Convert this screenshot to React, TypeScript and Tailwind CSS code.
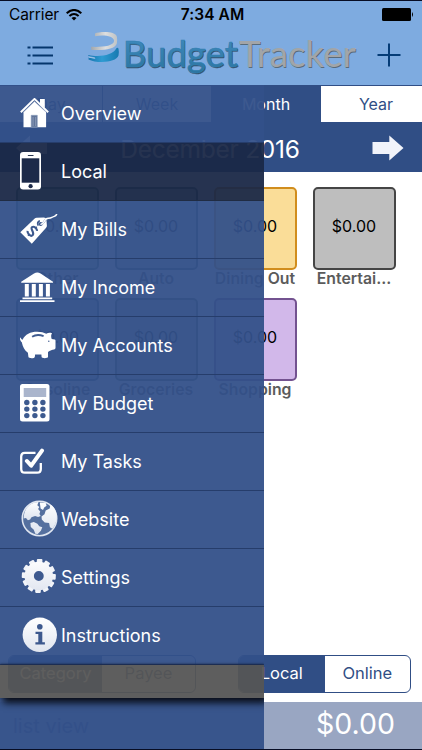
import React from 'react';

const gearTeeth = Array.from({ length: 12 }, (_, i) => i * 30 + 3);

function Icon({ name }: { name: string }) {
  switch (name) {
    case 'Overview':
      return (
        <svg width="30" height="30" viewBox="0 0 30 30">
          <path d="M20 1h4.8v9L20 6z" fill="#fff" />
          <path d="M14.5 3.5 3.5 14v15.3h22.6V14z" fill="#fff" />
          <path d="M.8 14.2 14.5.9l13.7 13.3" fill="none" stroke="#fff" strokeWidth="1.9" />
          <path d="M3.5 14.1 14.5 3.5l11.6 10.6" fill="none" stroke="#a9b7d0" strokeWidth=".6" />
          <path d="M11.2 17.3h6.1V29h-6.1z" fill="#607499" stroke="#8b9dbd" strokeWidth=".6" />
          <path d="M12.5 19h1.2v9h-1.2zm2.5 0h1.2v9H15z" fill="#8293b1" />
        </svg>
      );
    case 'Local':
      return (
        <svg width="22" height="38" viewBox="0 0 22 38">
          <rect width="21" height="37.5" rx="3.2" fill="#fff" />
          <path d="M1.7 6.3h17.6v24.4H1.7z" fill="#1c2a49" />
          <path d="M8.3 3.5h4.8" stroke="#26344f" strokeWidth="1.1" strokeLinecap="round" />
          <circle cx="10.6" cy="34.2" r="2.1" fill="#1c2a49" />
        </svg>
      );
    case 'My Bills':
      return (
        <svg width="38" height="30" viewBox="0 0 38 30">
          <path d="M.3 18.2 14.7 4.5c.6-.6 1-.8 1.8-.8l7.2-.3c1.6 0 2.5.8 2.7 2.2l.5 6.1c0 1-.3 1.7-1 2.4L11.8 29.7Z" fill="#fff" />
          <circle cx="20.6" cy="10" r="2" fill="#3d598e" />
          <path d="M18.4 11.6c-1.5-1.7-.5-4.6 1.5-4.8M21 10.2c3.2-.2 3-3.8 5-5" fill="none" stroke="#3d598e" strokeWidth="1.8" />
          <path d="M21 10.2c4.1-.3 2.5-6 7.3-5.9 3.4.1 3-.9 5.2-1.7 1.6-.6 2.4-.6 3.1-2.2" fill="none" stroke="#fff" strokeWidth="1.5" strokeLinecap="round" />
          <g transform="rotate(45 12 17.5)" fill="none" stroke="#3d598e">
            <path d="M15.1 13.5c-1.2-1.5-5.6-1.6-6.2.8-.6 2.7 6.2 2.1 6.2 5.2 0 2.9-4.9 2.9-6.7.8" strokeWidth="2.1" />
            <path d="M12 10.8v2m0 8.4v2.1" strokeWidth="1.6" />
          </g>
        </svg>
      );
    case 'My Income':
      return (
        <svg width="36" height="31" viewBox="0 0 36 31" fill="#fff">
          <path d="M1.2 10.8v-1L14 1.5q3.3-2.2 6.6 0L33 9.8v1zM4.8 12h4v12.6h-4zm7 0h4v12.6h-4zm7.1 0h4v12.6h-4zm7 0h4v12.6h-4zM2.5 25.4h29.7v1.8H2.5zM0 28.3h34.5v1.6H0z" />
        </svg>
      );
    case 'My Accounts':
      return (
        <svg width="36" height="28" viewBox="0 0 36 28">
          <path d="M0 6.6c.7-.2 1.1 2.2 2.6 2.1C5.2 3.2 10.7.6 17.4.7c4 .1 6.3.7 8.8 2.1 1.7-1 3.2-1.1 5.2-.8.9.3.6.8.1 1.2-.5.8-.5 3 .2 4.7l3 .7c.8.3.8.7.8 1.3v7.2c0 1.5-2.5 1.6-4.3 2.2-1.3.6-2.2 1.1-3.2 1.7v5c0 1.5-6.3 1.6-6.4 0l-.2-2.5h-6.3l-.3 2.4c-.3 1.8-6.2 1.8-6.4-.1l-.5-4.1C4.4 19.3 2.8 15.9 1.8 11.2.4 10.5-.7 6.8 0 6.6Z" fill="#fff" />
          <path d="M12.1 5.7c3.2-2 7.6-2.1 11.5-.6" stroke="#405c90" strokeWidth="1.8" fill="none" />
          <circle cx="28.8" cy="10.3" r=".7" fill="#3c588d" />
        </svg>
      );
    case 'My Budget':
      return (
        <svg width="30" height="38" viewBox="0 0 30 38">
          <rect width="29.5" height="37.5" rx="2.5" fill="#fff" />
          <path d="M3.7 4h22.5v9H3.7z" fill="#aab5cc" />
          {[18.5, 25.1, 31.6].map((y) => [6.8, 14.9, 22.9].map((x) => <circle key={`${x}-${y}`} cx={x} cy={y} r="2.7" fill="#3d5a8f" />))}
        </svg>
      );
    case 'My Tasks':
      return (
        <svg width="25" height="27" viewBox="0 0 25 27" fill="none" stroke="#fff">
          <path d="M15.5 4.9H4.8Q1.2 4.9 1.2 8.5V21q0 3.7 3.6 3.7h12.3q3.7 0 3.7-3.7v-6" strokeWidth="2.3" />
          <path d="m6.9 13 4.3 4.7L22 2.6" strokeWidth="4" strokeLinecap="round" strokeLinejoin="round" />
        </svg>
      );
    case 'Website':
      return (
        <svg width="37" height="37" viewBox="0 0 37 37">
          <defs><linearGradient id="globe" x2="0" y2="1"><stop stopColor="#fff" /><stop offset="1" stopColor="#dde3ef" /></linearGradient></defs>
          <circle cx="18.5" cy="18.5" r="17.2" fill="#55709f" stroke="#dfe5f0" strokeWidth="1.6" />
          <path d="M5 9C8 4.8 12 2.2 17.5 2l-1.2 3.2 2 1.8-1.2 2 2.1 2.4-.8 2.7 1.3 1.8-2.6 1.2-3-1.2-3.6 1.3-1.4 2.2-2.2.8-1.9-2.2-2.4.6C2.9 15 3.3 12 5 9z" fill="url(#globe)" />
          <path d="M9.4 22.9l3.4-1 3.6 1.9 1.9 2.5 3 .9-1.4 3.6-3.2 3.2-2.4-.3-1.5-3.9-3-2.7zM18.8 2.5l5.8.3 1 3-2.4 1.7-1.2 2.6-2.4-1.6zM20.5 16.6l3-2.4 1.2-3.6 4-2.1.8-4.1C34.2 7.7 36 13 35.6 18.2c-.4 4.5-2 7.9-4.3 10.6l-2.4-1.5-.8-4.4-4.4-.5-2.9-2.8z" fill="url(#globe)" />
        </svg>
      );
    case 'Settings':
      return (
        <svg width="36" height="36" viewBox="0 0 36 36">
          <defs><linearGradient id="gear" gradientUnits="userSpaceOnUse" x1="0" y1="0" x2="0" y2="36"><stop stopColor="#fff" /><stop offset="1" stopColor="#dfe4ef" /></linearGradient></defs>
          <g fill="#f2f4f9">{gearTeeth.map((a) => <rect key={a} x="15" y="1" width="5.6" height="7" rx="1" transform={`rotate(${a} 17.8 18)`} />)}</g>
          <circle cx="17.8" cy="18" r="9.6" fill="none" stroke="url(#gear)" strokeWidth="9.3" />
        </svg>
      );
    default:
      return (
        <svg width="36" height="36" viewBox="0 0 36 36">
          <defs><linearGradient id="info" x2="0" y2="1"><stop stopColor="#fff" /><stop offset="1" stopColor="#e0e5ef" /></linearGradient></defs>
          <circle cx="17.8" cy="17.8" r="17.2" fill="url(#info)" />
          <circle cx="17.8" cy="9.7" r="2.8" fill="#3c588d" />
          <path d="M13.5 14.7h6.8v10.5h2.6v2.2h-9.5v-2.2h2.9v-8.3h-2.8z" fill="#3c588d" />
        </svg>
      );
  }
}

const menu = [
  { label: 'Overview', pos: 'pl-[20px] pt-[13px]' },
  { label: 'Local', pos: 'pl-[20px] pt-[9px]' },
  { label: 'My Bills', pos: 'pl-[20px] pt-[13px]' },
  { label: 'My Income', pos: 'pl-[20px] pt-[13px]' },
  { label: 'My Accounts', pos: 'pl-[20px] pt-[14px]' },
  { label: 'My Budget', pos: 'pl-[20px] pt-[9px]' },
  { label: 'My Tasks', pos: 'pl-[20px] pt-[15px]' },
  { label: 'Website', pos: 'pl-[21px] pt-[9px]' },
  { label: 'Settings', pos: 'pl-[21px] pt-[9px]' },
  { label: 'Instructions', pos: 'pl-[22px] pt-[10px]' },
];

const tiles = [
  { label: 'Other', style: 'bg-[#b6d7c8] border-[#477f68]' },
  { label: 'Auto', style: 'bg-[#bfd0d0] border-[#476767]' },
  { label: 'Dining Out', style: 'bg-[#fadd98] border-[#d18d1d]' },
  { label: 'Entertai...', style: 'bg-[#bebebe] border-[#454545]' },
  { label: 'Gasoline', style: 'bg-[#a9c2cf] border-[#395f73]' },
  { label: 'Groceries', style: 'bg-[#b9c9b9] border-[#4c6c4c]' },
  { label: 'Shopping', style: 'bg-[#d2b8ea] border-[#735290]' },
];

function Logo() {
  return (
    <svg className="ml-[33px] shrink-0" width="272" height="56" viewBox="86 29 272 56">
      <defs>
        <linearGradient id="blue" x2="0" y2="1"><stop stopColor="#428dc2" /><stop offset="1" stopColor="#2a749f" /></linearGradient>
        <linearGradient id="silver" x2="1" y2="0"><stop stopColor="#a3a8ac" /><stop offset=".55" stopColor="#dddedf" /><stop offset="1" stopColor="#bfc3c5" /></linearGradient>
        <linearGradient id="swirl"><stop stopColor="#1674ae" /><stop offset=".45" stopColor="#2f9bd2" /><stop offset="1" stopColor="#1679b0" /></linearGradient>
      </defs>
      <path d="M95 33.4c4-1.6 20.5-3 21.9 3.4q.5 3 0 6.4c-1.5 6.3-14.6 7.6-25.7 6.6v-3c9 .5 22.7-.2 22.9-6-.3-5-10.7-6.2-19.1-4.6Z" fill="url(#silver)" />
      <path d="M88.3 54.9c9.5 2.3 24.7 1 27.9-6.3.4-1 2-1 2.3.1q.8 3.5 0 6.9c-2.3 7.5-22.2 7.8-30 3.8l.1-1.8 6.2 1v-1.4l-6.4-1.1z" fill="url(#swirl)" />
      <path d="m89 57.2 6.2 1.2" stroke="#a9cbe4" strokeWidth=".8" />
      <g fontFamily="Lato, sans-serif" fontSize="36">
        <text x="123.5" y="67.9" textLength="115" lengthAdjust="spacingAndGlyphs" fill="#34516c" stroke="#34516c" strokeWidth=".4">Budget</text>
        <text x="122.8" y="67" textLength="115" lengthAdjust="spacingAndGlyphs" fill="url(#blue)" stroke="#327fb0" strokeWidth=".6">Budget</text>
        <text x="239.7" y="67.8" textLength="117" lengthAdjust="spacingAndGlyphs" fill="#596b7a">Tracker</text>
        <text x="239" y="67" textLength="117" lengthAdjust="spacingAndGlyphs" fill="#a2a5a8">Tracker</text>
      </g>
    </svg>
  );
}

export default function App() {
  return (
    <div className="relative flex h-[750px] w-[422px] flex-col overflow-hidden border-y border-[#070d24] bg-white font-['Inter','Liberation_Sans',sans-serif]">
      <header className="h-[84px] shrink-0 bg-[#7eabe0]">
        <div className="grid h-7 grid-cols-[1fr_auto_1fr] items-center pl-[9px] pr-2 text-black">
          <div className="flex items-center gap-[7px]">
            <span className="text-[15.5px] tracking-[-0.1px]">Carrier</span>
            <svg className="-mt-px" width="16" height="12" viewBox="0 0 16 12" fill="none" stroke="#000" strokeWidth="2.1"><path d="M.7 4.2Q8-2.2 15.3 4.2M3.4 7q4.6-4 9.2 0" /><path d="m5.5 9 2.5 2.6L10.5 9Q8 7 5.5 9Z" fill="#000" stroke="none" /></svg>
          </div>
          <span className="pl-0.5 text-[15.5px] font-semibold tracking-[0.1px]">7:34 AM</span>
          <svg className="-mt-0.5 justify-self-end" width="32" height="13" viewBox="0 0 32 13"><rect width="29" height="13" rx="1.5" /><path d="M30 4q2 2.5 0 5z" /></svg>
        </div>
        <div className="flex h-14 pl-[27px]">
          <svg className="mt-[16px] shrink-0" width="26" height="22" viewBox="0 0 26 22" fill="none" stroke="#05366c" strokeWidth="2.2"><path d="M.5 2.5h3m2 0H26M.5 10.5h3m2 0H26M.5 18.5h3m2 0H26" /></svg>
          <Logo />
          <svg className="ml-[19px] mt-[14px] shrink-0" width="24" height="24" viewBox="0 0 24 24" stroke="#053c77" strokeWidth="2"><path d="M12 .5v23M.5 12h23" /></svg>
        </div>
      </header>

      <nav className="flex h-[37px] shrink-0 border-t border-[#304e85] text-[16px] text-[#304e85]">
        <div className="flex w-[103px] shrink-0 items-center justify-center border-r border-[#304e85]">Day</div>
        <div className="flex w-[108px] shrink-0 items-center justify-center">Week</div>
        <div className="flex w-[110px] shrink-0 items-center justify-center bg-[#304e85] text-white">Month</div>
        <div className="flex w-[110px] shrink-0 items-center justify-center">Year</div>
      </nav>
      <div className="flex h-[50px] shrink-0 items-center justify-between bg-[#304e85] pl-[16px] pr-[18px] pt-[2px] text-[24.5px] text-white">
        <svg width="32" height="26" viewBox="0 0 32 26" fill="#e9edf5"><path d="M0 13 14 .5V7h17v12H14v6.5z" /></svg>
        <span className="pt-0.5 tracking-[-0.25px]">December 2016</span>
        <svg width="32" height="26" viewBox="0 0 32 26" fill="#f1f3fa"><path d="M31.5 13 17.3.5V7H.5v12h16.8v6.5z" /></svg>
      </div>

      <main className="grid grow content-start grid-cols-[repeat(4,83px)] gap-x-[16px] gap-y-[6px] px-[15.5px] pt-[15px]">
        {tiles.map((t) => (
          <div key={t.label} className="flex h-[104.5px] flex-col items-center">
            <div className={`flex h-[83px] w-[83px] shrink-0 items-center justify-center rounded-[5px] border-2 pb-[5px] text-[16px] text-black ${t.style}`}>$0.00</div>
            <span className="whitespace-nowrap text-[15.8px] font-semibold leading-[18px] text-[#5b5b5b]">{t.label}</span>
          </div>
        ))}
      </main>

      <div className="flex h-[47px] shrink-0 items-start justify-between pl-[8px] pr-[11px] text-[16.5px] text-[#304e85]">
        <div className="flex h-[38px] w-[188px] overflow-hidden rounded-[6px] border border-[#304e85]">
          <span className="flex w-1/2 items-center justify-center bg-[#304e85] pb-0.5 text-white">Category</span>
          <span className="flex w-1/2 items-center justify-center pb-0.5">Payee</span>
        </div>
        <div className="flex h-[38px] w-[173px] overflow-hidden rounded-[6px] border border-[#304e85]">
          <span className="flex w-1/2 items-center justify-center bg-[#304e85] pb-0.5 text-white">Local</span>
          <span className="flex w-1/2 items-center justify-center pb-0.5">Online</span>
        </div>
      </div>
      <footer className="flex h-[47px] shrink-0 items-center justify-between bg-[#99a6c2] pl-[13px] pr-[27px] text-white">
        <span className="text-[20px] text-[#3d5684]">list view</span>
        <span className="pb-0.5 text-[28.5px]">$0.00</span>
      </footer>

      <aside className="absolute bottom-0 left-0 top-[84px] flex w-[263.5px] flex-col overflow-hidden text-white">
        {menu.map((item) => (
          <div key={item.label} className={`flex h-[58px] shrink-0 border-b ${item.label === 'Local' ? 'border-[#202c43] bg-[#1a2847f2]' : 'border-[#263d6b] bg-[#335089f2]'}`}>
            <div className={`w-[61px] shrink-0 ${item.pos}`}><Icon name={item.label} /></div>
            <span className="flex items-center text-[18px]">{item.label}</span>
          </div>
        ))}
        <div className="relative h-[33px] shrink-0 bg-[#555555f2] shadow-[3px_5px_7px_#080d18,0_-1px_2px_#1b2c4e]" />
        <div className="grow bg-[#335089f2]" />
      </aside>
    </div>
  );
}
